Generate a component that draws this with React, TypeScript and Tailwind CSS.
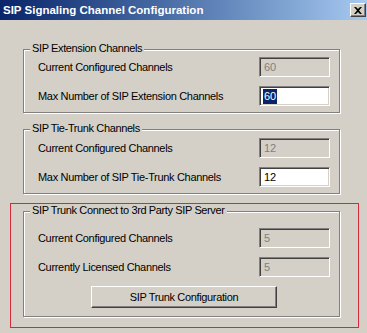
import React from "react";

const FONT = { fontFamily: '"Liberation Sans", Arial, sans-serif' };

function Group({ title, className, children }: { title: string; className?: string; children: React.ReactNode }) {
  return (
    <div
      className={
        "relative w-[317px] border border-[#808080] shadow-[inset_1px_1px_0_#ffffff,1px_1px_0_#ffffff] " +
        (className ?? "")
      }
    >
      <span className="absolute -top-[8px] left-[6px] px-[2px] bg-[#d4d0c8] text-[11px] leading-[13px] tracking-[-0.38px] text-black whitespace-nowrap">
        {title}
      </span>
      {children}
    </div>
  );
}

function Field({ label, value, disabled, selected }: { label: string; value: string; disabled?: boolean; selected?: boolean }) {
  return (
    <div className="grid grid-cols-[221px_71px] items-center h-[20px]">
      <span className="text-[11px] leading-[13px] tracking-[-0.32px] text-black whitespace-nowrap">{label}</span>
      <div
        className={
          "h-[20px] w-[71px] border border-t-[#808080] border-l-[#808080] border-b-white border-r-white shadow-[inset_1px_1px_0_#404040,inset_-1px_-1px_0_#d4d0c8] flex items-center pl-[3px] text-[11px] leading-[13px] " +
          (disabled ? "bg-[#d4d0c8] text-[#808080]" : "bg-white text-black")
        }
      >
        {selected ? (
          <span className="bg-[#0a246a] text-white h-[15px] flex items-center px-[1px]">{value}</span>
        ) : (
          <span className="pl-[1px]">{value}</span>
        )}
      </div>
    </div>
  );
}

export default function App() {
  return (
    <div className="w-[367px] h-[333px] bg-[#d4d0c8] overflow-hidden flex flex-col" style={FONT}>
      <div className="h-[20px] flex items-center justify-between bg-gradient-to-r from-[#0a246a] to-[#a6caf0] pl-[3px] pr-[1px]">
        <span className="text-white font-bold text-[11.5px] leading-[13px] whitespace-nowrap">
          SIP Signaling Channel Configuration
        </span>
        <div className="w-[16px] h-[14px] bg-[#d4d0c8] border border-t-white border-l-white border-b-[#404040] border-r-[#404040] shadow-[inset_-1px_-1px_0_#808080] flex items-center justify-center">
          <svg width="8" height="7" viewBox="0 0 8 7">
            <path d="M0 0h2l2 2 2-2h2L5 3.5 8 7H6L4 5 2 7H0l3-3.5z" fill="#000" />
          </svg>
        </div>
      </div>

      <div className="flex flex-col pt-[29px]">
        <Group title="SIP Extension Channels" className="ml-[23px] pt-[7px] pb-[6px] pl-[14px] flex flex-col gap-[9px]">
          <Field label="Current Configured Channels" value="60" disabled />
          <Field label="Max Number of SIP Extension Channels" value="60" selected />
        </Group>

        <Group title="SIP Tie-Trunk Channels" className="ml-[23px] mt-[16px] pt-[8px] pb-[6px] pl-[14px] flex flex-col gap-[9px]">
          <Field label="Current Configured Channels" value="12" disabled />
          <Field label="Max Number of SIP Tie-Trunk Channels" value="12" />
        </Group>

        <div className="ml-[10px] mt-[9px] w-[349px] border border-[#d42a3c] pl-[12px] pt-[7px] pb-[10px]">
          <Group title="SIP Trunk Connect to 3rd Party SIP Server" className="pt-[16px] pb-[8px] pl-[14px] flex flex-col gap-[9px]">
            <Field label="Current Configured Channels" value="5" disabled />
            <Field label="Currently Licensed Channels" value="5" disabled />
            <div className="ml-[53px] w-[186px] h-[22px] bg-[#d4d0c8] border border-t-white border-l-white border-b-[#404040] border-r-[#404040] shadow-[inset_-1px_-1px_0_#808080] flex items-center justify-center text-[11px] leading-[13px] tracking-[-0.35px] text-black">
              SIP Trunk Configuration
            </div>
          </Group>
        </div>
      </div>
    </div>
  );
}
